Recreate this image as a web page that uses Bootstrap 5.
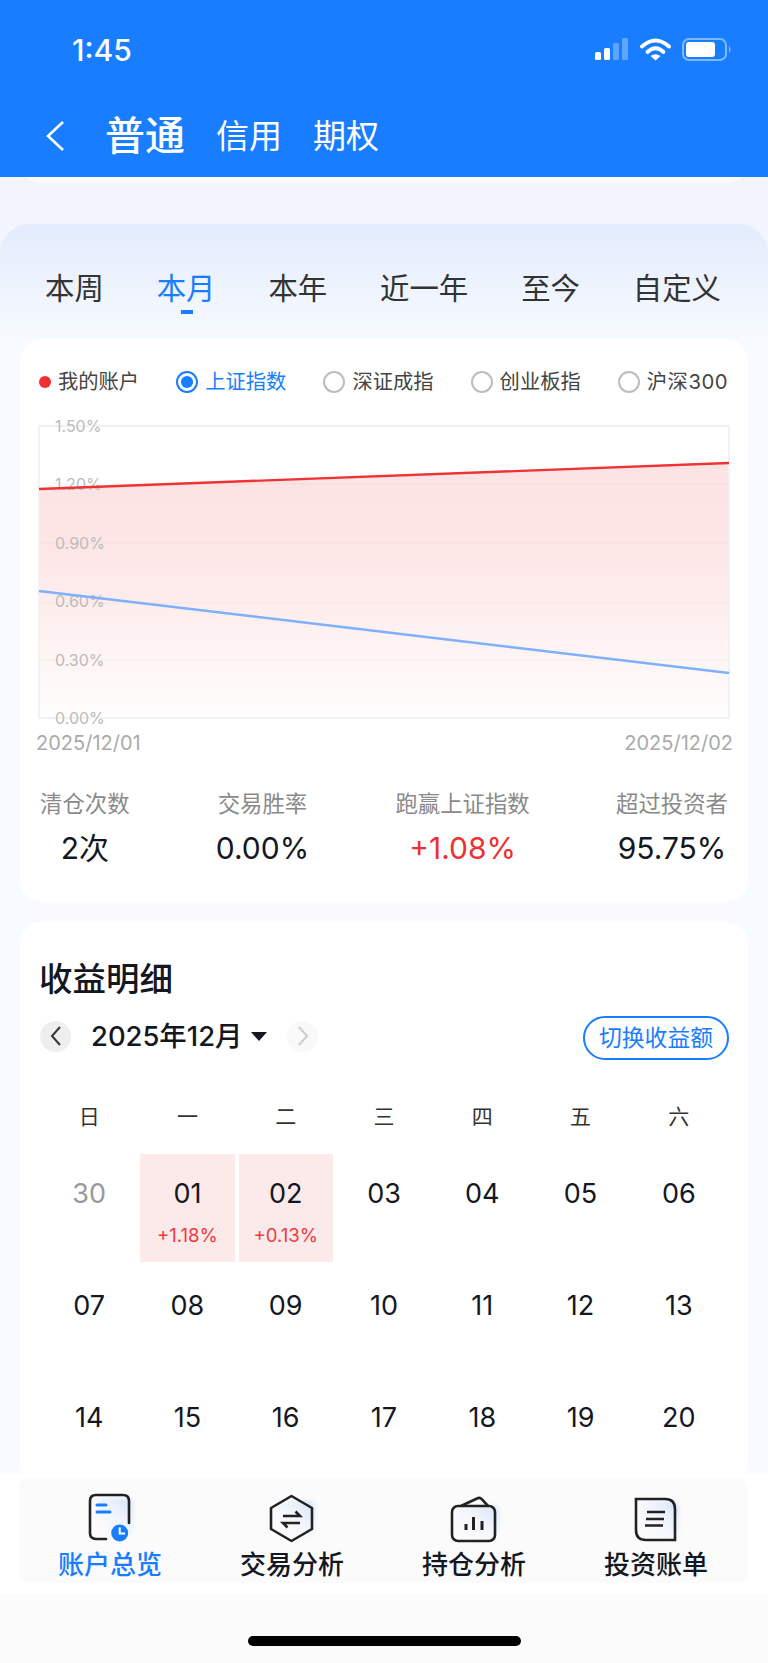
<!DOCTYPE html>
<html lang="zh-CN">
<head>
  <meta charset="UTF-8">
  <meta name="viewport" content="width=device-width, initial-scale=1.0">
  <title>账户总览</title>
  <link href="https://cdn.jsdelivr.net/npm/bootstrap@5.3.0/dist/css/bootstrap.min.css" rel="stylesheet">
  <style>
    body { font-family: Inter, "Noto Sans CJK SC", sans-serif; color: #14171f; background: #fbfbfb; }
    .app-shell { height: 1663px; overflow: hidden; }

    /* header */
    .app-header { background: #187eff; color: #fff; height: 177px; flex: none; }
    .status-row { height: 99px; padding: 31px 36px 0 72px; }
    .status-time { font-size: 30px; font-weight: 500; line-height: 38px; }
    .status-icons { margin-top: 7px; }
    .title-row { padding-left: 46px; height: 78px; padding-bottom: 4px; }
    .acct-active { font-size: 40px; font-weight: 500; margin-left: 41px; margin-right: 31px; line-height: 48px; }
    .acct-other { font-size: 33px; margin-right: 31px; line-height: 48px; }

    /* scroll area */
    .page-body { flex: 1 1 0; min-height: 0; overflow: hidden; background: #f2f5fd; }
    .peek-card { height: 30px; margin: -24px 20px 0; background: #fff; border-radius: 0 0 20px 20px; }
    .panel-bg { margin-top: 41px; border-radius: 30px 30px 0 0; padding: 47px 20px 0;
      background: linear-gradient(180deg, #e3ecfd 0, #f7faff 115px); }
    .range-tabs { padding: 0 27px 0 25px; font-size: 29.4px; line-height: 36px; color: #333; }
    .range-on { color: #187eff; position: relative; }
    .range-on::after { content: ""; position: absolute; left: 24px; bottom: -7px; width: 12px; height: 4px; background: #187eff; }
    .range-wrap { height: 68px; }
    .white-card { background: #fff; border-radius: 22px; }

    /* chart card */
    .chart-card { height: 563px; padding: 26px 20px 0 19px; }
    .legend-row { font-size: 20.3px; line-height: 34px; color: #444; height: 34px; }
    .legend-dot { width: 12px; height: 12px; border-radius: 50%; background: #ee2f33; margin-right: 7px; }
    .legend-radio.form-check-input { width: 22px; height: 22px; margin: 0 7px 0 0; border: 2px solid #bdbdbd; flex: none; }
    .legend-radio.form-check-input:checked { background-color: #fff; border-color: #187eff;
      background-image: url("data:image/svg+xml,%3csvg xmlns='http://www.w3.org/2000/svg' viewBox='-4 -4 8 8'%3e%3ccircle r='2.7' fill='%23187eff'/%3e%3c/svg%3e"); }
    .legend-on { color: #187eff; }
    .legend-wide { letter-spacing: .5px; }
    .chart-svg { display: block; margin: 15px 0 0 -5px; overflow: visible; }
    .chart-svg text { font-size: 16px; fill: #bbb; font-family: Inter, sans-serif; }
    .date-row { font-size: 20px; line-height: 26px; color: #aaa; margin: 0 -5px 0 -3px; height: 26px; }
    .stat-row { margin-top: 32px; padding-left: 1px; }
    .stat-label { font-size: 22.4px; line-height: 32px; color: #8a8a8a; }
    .stat-value { font-size: 30px; line-height: 40px; margin-top: 8px; }
    .stat-red { color: #ee2f33; }

    /* calendar card */
    .calendar-card { margin-top: 20px; padding: 35px 22px 0 21px; }
    .calendar-title { font-size: 33.5px; font-weight: 500; line-height: 44px; margin: 0 0 0 -2px; }
    .month-row { margin-top: 13px; height: 44px; }
    .month-btn { width: 31px; height: 31px; border-radius: 50%; background: #eee; }
    .month-btn-first { margin-left: -1px; }
    .month-btn-off { background: #f9f9f9; }
    .month-label { font-size: 27.4px; font-weight: 500; line-height: 36px; margin: 0 9px 0 20px; }
    .month-caret { width: 0; height: 0; border: 8px solid transparent; border-top: 9px solid #14171f; border-bottom: 0; margin-right: 20px; }
    .switch-btn.btn { font-size: 22.8px; line-height: 30px; color: #187eff; border: 2px solid #187eff; border-radius: 22px; padding: 5px 14px; height: 44px; background: #fff; margin: 4px -3px 0 0; }
    .cal-grid { display: grid; grid-template-columns: repeat(7, 1fr); column-gap: 4px; row-gap: 4px; grid-auto-rows: 108px; margin-left: 1px; }
    .week-row { display: grid; grid-template-columns: repeat(7, 1fr); column-gap: 4px; font-size: 21px; line-height: 30px; color: #333; text-align: center; margin: 44px 0 22px 1px; }
    .cal-cell { text-align: center; padding-top: 21px; font-size: 27px; line-height: 38px; }
    .cal-gray { color: #999; }
    .cal-up { background: #fce9ea; }
    .cal-pct { font-size: 18.6px; line-height: 24px; color: #ee3b3f; margin-top: 10px; }

    /* bottom tabs */
    .bottom-bar { flex: none; height: 121px; background: #fff; padding: 4px 20px 12px 19px; }
    .bottom-inner { background: #fbfbfc; height: 105px; border-radius: 10px; }
    .bottom-tab { width: 182px; padding-top: 1px; font-size: 26px; font-weight: 500; line-height: 34px; text-align: center; color: #14171f; }
    .bottom-tab svg { display: block; margin: 0 auto; overflow: visible; }
    .soft-fill { filter: blur(2px); }
    .bottom-tab-on { color: #187eff; }
    .home-area { flex: none; height: 68px; background: #fbfbfb; padding-top: 41px; }
    .home-bar { width: 273px; height: 10px; border-radius: 5px; background: #000; margin-left: 248px; }
  </style>
</head>
<body>

<div class="app-shell d-flex flex-column">

  <!-- Status bar and account tabs -->
  <header class="app-header">
    <div class="status-row d-flex justify-content-between align-items-start">
      <span class="status-time">1:45</span>
      <svg width="139" height="26" viewBox="0 0 139 26" class="status-icons" fill="#fff">
        <rect x="2" y="14" width="6" height="8" rx="1.5"/>
        <rect x="11" y="10" width="6" height="12" rx="1.5"/>
        <rect x="20" y="5" width="6" height="17" rx="1.5" opacity=".3"/>
        <rect x="29" y="0" width="6" height="22" rx="1.5" opacity=".3"/>
        <path d="M49 8.500 Q62.500 -3.500 76 8.500" fill="none" stroke="#fff" stroke-width="3.800" stroke-linecap="round"/>
        <path d="M54.500 14 Q62.500 6.500 70.500 14" fill="none" stroke="#fff" stroke-width="3.800" stroke-linecap="round"/>
        <path d="M62.500 22.500 L57.500 18 Q62.500 14.500 67.500 18 Z"/>
        <rect x="90" y="1" width="43" height="21" rx="6" fill="none" stroke="#fff" stroke-opacity=".45" stroke-width="2"/>
        <rect x="93" y="4" width="29" height="15" rx="3"/>
        <path d="M136 8 Q139 11.500 136 15 Z" opacity=".5"/>
      </svg>
    </div>
    <div class="title-row d-flex align-items-center">
      <svg width="18" height="30" viewBox="0 0 18 30"><path d="M17 1 L2 15 L17 29" fill="none" stroke="#fff" stroke-width="2.600"/></svg>
      <span class="acct-active">普通</span>
      <span class="acct-other">信用</span>
      <span class="acct-other">期权</span>
    </div>
  </header>

  <main class="page-body">
    <div class="peek-card"></div>

    <div class="panel-bg">
      <div class="range-wrap">
        <div class="range-tabs d-flex justify-content-between">
          <span>本周</span>
          <span class="range-on">本月</span>
          <span>本年</span>
          <span>近一年</span>
          <span>至今</span>
          <span>自定义</span>
        </div>
      </div>

      <!-- Return chart -->
      <section class="white-card chart-card">
        <div class="legend-row d-flex justify-content-between align-items-center">
          <label class="d-flex align-items-center"><span class="legend-dot"></span>我的账户</label>
          <label class="d-flex align-items-center legend-on"><input class="form-check-input legend-radio" type="radio" name="idx" checked>上证指数</label>
          <label class="d-flex align-items-center"><input class="form-check-input legend-radio" type="radio" name="idx">深证成指</label>
          <label class="d-flex align-items-center"><input class="form-check-input legend-radio" type="radio" name="idx">创业板指</label>
          <label class="d-flex align-items-center legend-wide"><input class="form-check-input legend-radio" type="radio" name="idx">沪深300</label>
        </div>

        <svg class="chart-svg" width="700" height="316" viewBox="-5 -12 700 316">
          <defs>
            <linearGradient id="areaFill" x1="0" y1="0" x2="0" y2="1">
              <stop offset="0" stop-color="#fde3e3"/>
              <stop offset=".35" stop-color="#fde6e6"/>
              <stop offset="1" stop-color="#fffdfd"/>
            </linearGradient>
          </defs>
          <polygon points="0,63 690,37 690,292 0,292" fill="url(#areaFill)"/>
          <g stroke="#a08080" stroke-opacity=".06" stroke-width="1.500">
            <line x1="0" y1="58" x2="690" y2="58"/>
            <line x1="0" y1="117" x2="690" y2="117"/>
            <line x1="0" y1="177" x2="690" y2="177"/>
            <line x1="0" y1="234" x2="690" y2="234"/>
          </g>
          <rect x="0" y="0" width="690" height="292" fill="none" stroke="#f2f2f3" stroke-width="2"/>
          <text x="16" y="6">1.50%</text>
          <text x="16" y="64">1.20%</text>
          <text x="16" y="123">0.90%</text>
          <text x="16" y="181">0.60%</text>
          <text x="16" y="240">0.30%</text>
          <text x="16" y="298">0.00%</text>
          <line x1="0" y1="63" x2="690" y2="37" stroke="#ee3236" stroke-width="2.400"/>
          <line x1="0" y1="165" x2="690" y2="247" stroke="#7eb0fb" stroke-width="2.400"/>
        </svg>

        <div class="date-row d-flex justify-content-between">
          <span>2025/12/01</span>
          <span>2025/12/02</span>
        </div>

        <div class="stat-row d-flex justify-content-between text-center">
          <div><div class="stat-label">清仓次数</div><div class="stat-value">2次</div></div>
          <div><div class="stat-label">交易胜率</div><div class="stat-value">0.00%</div></div>
          <div><div class="stat-label">跑赢上证指数</div><div class="stat-value stat-red">+1.08%</div></div>
          <div><div class="stat-label">超过投资者</div><div class="stat-value">95.75%</div></div>
        </div>
      </section>

      <!-- Profit calendar -->
      <section class="white-card calendar-card">
        <h2 class="calendar-title">收益明细</h2>
        <div class="month-row d-flex align-items-center">
          <span class="month-btn month-btn-first d-flex align-items-center justify-content-center">
            <svg width="12" height="20" viewBox="0 0 12 20"><path d="M10 1 L2 10 L10 19" fill="none" stroke="#333" stroke-width="2"/></svg>
          </span>
          <span class="month-label">2025年12月</span>
          <span class="month-caret"></span>
          <span class="month-btn month-btn-off d-flex align-items-center justify-content-center">
            <svg width="12" height="20" viewBox="0 0 12 20"><path d="M2 1 L10 10 L2 19" fill="none" stroke="#ccc" stroke-width="2"/></svg>
          </span>
          <button type="button" class="btn switch-btn ms-auto">切换收益额</button>
        </div>

        <div class="week-row">
          <span>日</span><span>一</span><span>二</span><span>三</span><span>四</span><span>五</span><span>六</span>
        </div>

        <div class="cal-grid">
          <div class="cal-cell cal-gray">30</div>
          <div class="cal-cell cal-up">01<div class="cal-pct">+1.18%</div></div>
          <div class="cal-cell cal-up">02<div class="cal-pct">+0.13%</div></div>
          <div class="cal-cell">03</div>
          <div class="cal-cell">04</div>
          <div class="cal-cell">05</div>
          <div class="cal-cell">06</div>
          <div class="cal-cell">07</div>
          <div class="cal-cell">08</div>
          <div class="cal-cell">09</div>
          <div class="cal-cell">10</div>
          <div class="cal-cell">11</div>
          <div class="cal-cell">12</div>
          <div class="cal-cell">13</div>
          <div class="cal-cell">14</div>
          <div class="cal-cell">15</div>
          <div class="cal-cell">16</div>
          <div class="cal-cell">17</div>
          <div class="cal-cell">18</div>
          <div class="cal-cell">19</div>
          <div class="cal-cell">20</div>
        </div>
      </section>
    </div>
  </main>

  <!-- Bottom tabs -->
  <nav class="bottom-bar">
    <div class="bottom-inner d-flex">
      <div class="bottom-tab bottom-tab-on">
        <svg width="60" height="69" viewBox="0 0 60 69">
          <defs>
            <linearGradient id="softBlue" x1=".1" y1=".9" x2=".9" y2=".1">
              <stop offset="0" stop-color="#fbfbfc" stop-opacity="0"/>
              <stop offset="1" stop-color="#d9e5fb"/>
            </linearGradient>
          </defs>
          <rect class="soft-fill" x="14" y="19" width="39" height="38" rx="6" fill="url(#softBlue)"/>
          <path d="M26 60 H16 Q10 60 10 54 V22 Q10 16 16 16 H43 Q49 16 49 22 V44" fill="none" stroke="#222" stroke-width="2.600" stroke-linecap="round"/>
          <path d="M17 26 H26 M17 33 H30" stroke="#187eff" stroke-width="3" stroke-linecap="round"/>
          <circle cx="39.700" cy="54" r="8.500" fill="#187eff"/>
          <path d="M39.700 48.500 V54.500 H45" fill="none" stroke="#fff" stroke-width="2"/>
        </svg>
        账户总览
      </div>
      <div class="bottom-tab">
        <svg width="60" height="69" viewBox="0 0 60 69">
          <rect class="soft-fill" x="14" y="22" width="39" height="36" rx="6" fill="url(#softBlue)"/>
          <path d="M29.500 17 L50 29 V50 L29.500 62 L9 50 V29 Z" fill="none" stroke="#222" stroke-width="2.600" stroke-linejoin="round"/>
          <path d="M21 37 H38 L33.500 32.500 M38 44 H21 L25.500 48.500" fill="none" stroke="#222" stroke-width="2.600"/>
        </svg>
        交易分析
      </div>
      <div class="bottom-tab">
        <svg width="60" height="69" viewBox="0 0 60 69">
          <rect class="soft-fill" x="14" y="27" width="41" height="33" rx="6" fill="url(#softBlue)"/>
          <rect x="8" y="27" width="43" height="35" rx="6" fill="none" stroke="#222" stroke-width="2.600"/>
          <path d="M17 27 L33 19.500 Q36 18 38 20.500 L44 27" fill="none" stroke="#222" stroke-width="2.600"/>
          <path d="M22 45 V51 M29.500 38 V51 M38 42 V51" stroke="#222" stroke-width="3"/>
        </svg>
        持仓分析
      </div>
      <div class="bottom-tab">
        <svg width="60" height="69" viewBox="0 0 60 69">
          <rect class="soft-fill" x="14" y="22" width="39" height="38" rx="6" fill="url(#softBlue)"/>
          <path d="M10 20 H39 Q49 20 49 30 V61 H20 Q10 61 10 51 Z" fill="none" stroke="#222" stroke-width="2.600"/>
          <path d="M21 33 H39 M20 40 H38 M19 46.500 H37" stroke="#222" stroke-width="2.600"/>
        </svg>
        投资账单
      </div>
    </div>
  </nav>
  <div class="home-area"><div class="home-bar"></div></div>
</div>

<script src="https://cdn.jsdelivr.net/npm/bootstrap@5.3.0/dist/js/bootstrap.bundle.min.js"></script>
</body>
</html>
